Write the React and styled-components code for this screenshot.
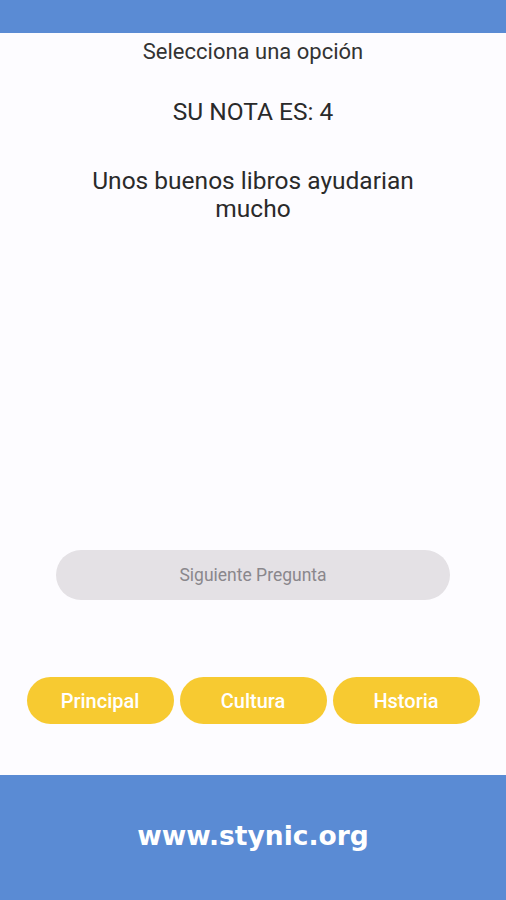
import React from 'react';
import styled, { createGlobalStyle } from 'styled-components';

const GlobalStyle = createGlobalStyle`
  html, body {
    margin: 0;
    padding: 0;
    background: #fdfcff;
  }
  body {
    font-family: Roboto, "Noto Sans", sans-serif;
  }
`;

const Screen = styled.div`
  width: 506px;
  height: 900px;
  display: flex;
  flex-direction: column;
  background: #fdfcff;
`;

const TopBar = styled.div`
  height: 33px;
  background: #5a8bd4;
  flex-shrink: 0;
`;

const Content = styled.div`
  flex: 1;
  display: flex;
  flex-direction: column;
  align-items: center;
`;

const Title = styled.div`
  margin-top: 6px;
  font-size: 22px;
  line-height: 26px;
  color: #333;
`;

const Score = styled.div`
  margin-top: 32px;
  font-size: 24.5px;
  line-height: 30px;
  color: #2a2a2a;
`;

const Message = styled.div`
  margin-top: 40px;
  width: 360px;
  text-align: center;
  font-size: 24.5px;
  line-height: 28px;
  color: #2a2a2a;
`;

const NextButton = styled.button`
  margin-top: 327px;
  width: 394px;
  height: 50px;
  border: none;
  border-radius: 25px;
  background: #e4e1e5;
  color: #8a878c;
  font-family: Roboto, sans-serif;
  font-size: 17.5px;
`;

const Menu = styled.div`
  margin-top: 77px;
  display: flex;
  gap: 6px;
`;

const MenuButton = styled.button`
  width: 147px;
  height: 47px;
  border: none;
  border-radius: 24px;
  background: #f7ca31;
  color: #fff;
  font-family: Roboto, sans-serif;
  font-weight: 500;
  font-size: 20px;
`;

const Footer = styled.div`
  height: 125px;
  background: #5a8bd4;
  display: flex;
  align-items: center;
  justify-content: center;
  flex-shrink: 0;
`;

const Site = styled.div`
  color: #fff;
  font-family: "DejaVu Sans", sans-serif;
  font-weight: bold;
  font-size: 26.5px;
  margin-top: -4px;
`;

export default function App() {
  return (
    <>
      <GlobalStyle />
      <Screen>
        <TopBar />
        <Content>
          <Title>Selecciona una opción</Title>
          <Score>SU NOTA ES: 4</Score>
          <Message>Unos buenos libros ayudarian mucho</Message>
          <NextButton>Siguiente Pregunta</NextButton>
          <Menu>
            <MenuButton>Principal</MenuButton>
            <MenuButton>Cultura</MenuButton>
            <MenuButton>Hstoria</MenuButton>
          </Menu>
        </Content>
        <Footer>
          <Site>www.stynic.org</Site>
        </Footer>
      </Screen>
    </>
  );
}
